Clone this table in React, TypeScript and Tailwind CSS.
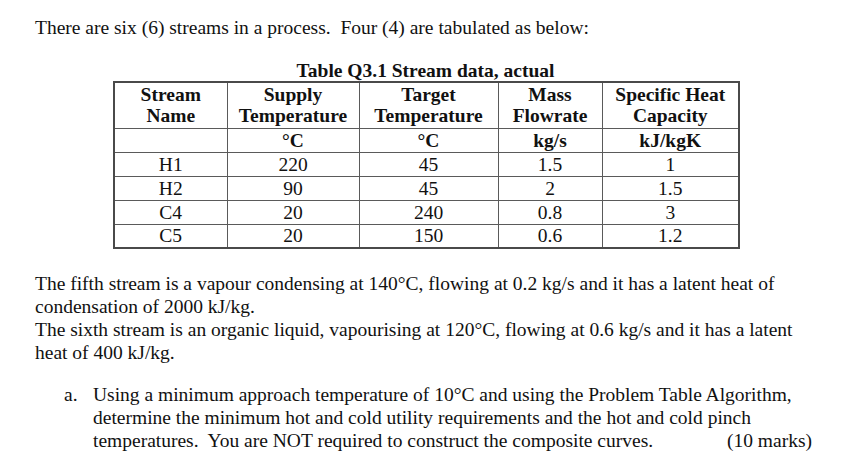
const rows = [
  { name: 'H1', supply: '220', target: '45', flow: '1.5', cp: '1' },
  { name: 'H2', supply: '90', target: '45', flow: '2', cp: '1.5' },
  { name: 'C4', supply: '20', target: '240', flow: '0.8', cp: '3' },
  { name: 'C5', supply: '20', target: '150', flow: '0.6', cp: '1.2' },
];

const cell = 'border border-[#5a5a5a] p-0 text-center align-middle';

export default function App() {
  return (
    <div className="w-[857px] h-[456px] overflow-hidden bg-white text-[#111] font-['Liberation_Serif',serif] text-[19.5px] leading-[23px]">
      <p className="pt-[16px] pl-[35px] whitespace-pre">There are six (6) streams in a process.  Four (4) are tabulated as below:</p>

      <div className="ml-[113px] w-[625px] mt-[21px]">
        <div className="text-center font-bold leading-[21px]">Table Q3.1 Stream data, actual</div>
        <table className="w-[625px] table-fixed border-collapse border-2 border-[#4a4a4a]">
          <colgroup>
            <col className="w-[113px]" />
            <col className="w-[132px]" />
            <col className="w-[139px]" />
            <col className="w-[104px]" />
            <col className="w-[137px]" />
          </colgroup>
          <thead className="font-bold">
            <tr className="h-[46px] leading-[21px]">
              <th className={cell}>Stream<br />Name</th>
              <th className={cell}>Supply<br />Temperature</th>
              <th className={cell}>Target<br />Temperature</th>
              <th className={cell}>Mass<br />Flowrate</th>
              <th className={cell}>Specific Heat<br />Capacity</th>
            </tr>
            <tr className="h-[24px] leading-[21px]">
              <th className={cell}></th>
              <th className={cell}>°C</th>
              <th className={cell}>°C</th>
              <th className={cell}>kg/s</th>
              <th className={cell}>kJ/kgK</th>
            </tr>
          </thead>
          <tbody>
            {rows.map((r) => (
              <tr key={r.name} className="h-[24px] leading-[21px]">
                <td className={cell}>{r.name}</td>
                <td className={cell}>{r.supply}</td>
                <td className={cell}>{r.target}</td>
                <td className={cell}>{r.flow}</td>
                <td className={cell}>{r.cp}</td>
              </tr>
            ))}
          </tbody>
        </table>
      </div>

      <div className="pl-[35px] mt-[23px] whitespace-pre">
        <p>The fifth stream is a vapour condensing at 140°C, flowing at 0.2 kg/s and it has a latent heat of</p>
        <p>condensation of 2000 kJ/kg.</p>
        <p>The sixth stream is an organic liquid, vapourising at 120°C, flowing at 0.6 kg/s and it has a latent</p>
        <p>heat of 400 kJ/kg.</p>
      </div>

      <ol className="mt-[19px] pl-[64px] pr-[45px]">
        <li className="flex">
          <span className="w-[29px] shrink-0">a.</span>
          <div className="flex-1 whitespace-pre">
            <div>Using a minimum approach temperature of 10°C and using the Problem Table Algorithm,</div>
            <div>determine the minimum hot and cold utility requirements and the hot and cold pinch</div>
            <div className="flex justify-between">
              <span>temperatures.  You are NOT required to construct the composite curves.</span>
              <span>(10 marks)</span>
            </div>
          </div>
        </li>
        <li className="flex">
          <span className="w-[29px] shrink-0">b.</span>
          <span>Design a heat exchanger network which will achieve the minimum utility targets.</span>
        </li>
      </ol>
    </div>
  );
}
